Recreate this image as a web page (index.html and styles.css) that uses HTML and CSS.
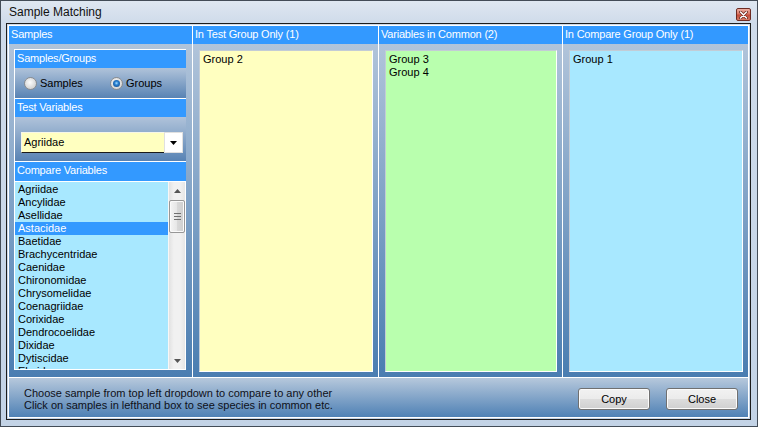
FILE: index.html
```html
<!DOCTYPE html>
<html>
<head>
<meta charset="utf-8">
<title>Sample Matching</title>
<link rel="stylesheet" href="styles.css">
</head>
<body>
<div class="window">
  <div class="titlebar">
    <span class="title">Sample Matching</span>
    <span class="close-btn"><svg width="9" height="8" viewBox="0 0 9 8"><path d="M1.5 1 L7.5 7 M7.5 1 L1.5 7" stroke="#6a2b22" stroke-width="3" stroke-linecap="round"/><path d="M1.5 1 L7.5 7 M7.5 1 L1.5 7" stroke="#ffffff" stroke-width="1.5" stroke-linecap="round"/></svg></span>
  </div>
  <div class="client">
    <div class="client-inner">
      <div class="panels">
        <section class="panel">
          <div class="phead">Samples</div>
          <div class="pbody left-body">
            <div class="sub">
              <div class="shead">Samples/Groups</div>
              <div class="sbody radios">
                <div class="radio"><span class="radio-dot"></span><span>Samples</span></div>
                <div class="radio"><span class="radio-dot checked"></span><span>Groups</span></div>
              </div>
            </div>
            <div class="sub">
              <div class="shead">Test Variables</div>
              <div class="sbody combo-body">
                <div class="combo">
                  <div class="combo-field">Agriidae</div>
                  <div class="combo-btn"><svg width="7" height="4" viewBox="0 0 7 4"><path d="M0 0H7L3.5 4Z" fill="#000"/></svg></div>
                </div>
              </div>
            </div>
            <div class="sub sub-list">
              <div class="shead shead-list">Compare Variables</div>
              <div class="listbox">
                <ul class="items">
                  <li>Agriidae</li>
                  <li>Ancylidae</li>
                  <li>Asellidae</li>
                  <li class="sel">Astacidae</li>
                  <li>Baetidae</li>
                  <li>Brachycentridae</li>
                  <li>Caenidae</li>
                  <li>Chironomidae</li>
                  <li>Chrysomelidae</li>
                  <li>Coenagriidae</li>
                  <li>Corixidae</li>
                  <li>Dendrocoelidae</li>
                  <li>Dixidae</li>
                  <li>Dytiscidae</li>
                  <li>Elmidae</li>
                </ul>
                <div class="scrollbar">
                  <div class="sb-btn"><svg width="7" height="4" viewBox="0 0 7 4"><path d="M0 4H7L3.5 0Z" fill="#555"/></svg></div>
                  <div class="sb-track">
                    <div class="sb-thumb"><svg width="7" height="7" viewBox="0 0 7 7"><path d="M0 0.5H7M0 3.5H7M0 6.5H7" stroke="#707070" stroke-width="1"/></svg></div>
                  </div>
                  <div class="sb-btn"><svg width="7" height="4" viewBox="0 0 7 4"><path d="M0 0H7L3.5 4Z" fill="#555"/></svg></div>
                </div>
              </div>
            </div>
          </div>
        </section>
        <section class="panel col">
          <div class="phead">In Test Group Only (1)</div>
          <div class="pbody col-body">
            <div class="box yellow"><div>Group 2</div></div>
          </div>
        </section>
        <section class="panel col">
          <div class="phead">Variables in Common (2)</div>
          <div class="pbody col-body">
            <div class="box green"><div>Group 3</div><div>Group 4</div></div>
          </div>
        </section>
        <section class="panel col">
          <div class="phead">In Compare Group Only (1)</div>
          <div class="pbody col-body">
            <div class="box blue"><div>Group 1</div></div>
          </div>
        </section>
      </div>
      <div class="bottombar">
        <div class="hint">
          <div>Choose sample from top left dropdown to compare to any other</div>
          <div>Click on samples in lefthand box to see species in common etc.</div>
        </div>
        <div class="buttons">
          <button class="btn">Copy</button>
          <button class="btn">Close</button>
        </div>
      </div>
    </div>
  </div>
</div>
</body>
</html>
```

FILE: styles.css
```css
* { box-sizing: border-box; }
html, body { margin: 0; padding: 0; }
body {
  width: 758px;
  height: 427px;
  overflow: hidden;
  font-family: "Liberation Sans", Arial, sans-serif;
  font-size: 11px;
  color: #000;
  background: #c6d5e7;
}
.window {
  width: 758px;
  height: 427px;
  border: 1px solid #434c57;
  background: linear-gradient(180deg, #dfe7f1 0, #cfdbea 22px, #c3d3e6 100%);
  display: flex;
  flex-direction: column;
}
.titlebar {
  height: 22px;
  flex-shrink: 0;
  display: flex;
  align-items: flex-start;
  padding-left: 8px;
}
.title {
  font-size: 12px;
  line-height: 22px;
  color: #111;
}
.close-btn {
  margin-left: auto;
  margin-top: 7px;
  margin-right: 6px;
  width: 15px;
  height: 13px;
  border: 1px solid #6e2b22;
  border-radius: 2px;
  background: linear-gradient(#eeb0a3, #da7663 45%, #c44a36 55%, #d67c67);
  display: flex;
  align-items: center;
  justify-content: center;
}
.client {
  margin: 0 6px 0 5px;
  height: 397px;
  flex-shrink: 0;
  border: 1px solid #1c1c1c;
  padding: 1px;
}
.client-inner {
  height: 100%;
  border: 1px solid #fff;
  display: flex;
  flex-direction: column;
}
.panels {
  display: grid;
  grid-template-columns: 183px 186px 184px 186px;
  height: 351px;
  flex-shrink: 0;
}
.panel {
  display: flex;
  flex-direction: column;
  min-height: 0;
}
.panel.col { border-left: 1px solid #fff; }
.phead, .shead {
  height: 18px;
  flex-shrink: 0;
  background: #3399ff;
  color: #fff;
  padding: 1px 2px 0 2px;
  line-height: 14px;
  letter-spacing: -0.2px;
  white-space: nowrap;
  overflow: hidden;
}
.pbody {
  flex: 1;
  min-height: 0;
  background: linear-gradient(#b1c4da, #4a7db1);
  display: flex;
  flex-direction: column;
}
.col-body { padding: 6px 5px 5px 6px; }
.box {
  flex: 1;
  border: 1px solid;
  border-color: #c3ccd6 #fff #fff #c3ccd6;
  padding: 2px 3px;
  line-height: 13px;
}
.yellow { background: #ffffc0; }
.green { background: #b9ffae; }
.blue { background: #a8e8ff; }

.left-body { padding: 5px 6px 7px 5px; }
.sub {
  border-top: 1px solid #fff;
  border-left: 1px solid #fff;
  display: flex;
  flex-direction: column;
  flex-shrink: 0;
}
.sbody { background: linear-gradient(#b0c3da, #5883b4); }
.radios {
  height: 30px;
  display: grid;
  grid-template-columns: 86px 86px;
  align-items: center;
  padding-left: 9px;
}
.radio {
  display: flex;
  align-items: center;
  gap: 3px;
  line-height: 13px;
}
.radio-dot {
  width: 13px;
  height: 13px;
  border-radius: 50%;
  border: 1px solid #8a8c8f;
  background: radial-gradient(circle at 45% 40%, #fdfdfd 0, #e6e6e6 40%, #c4c4c4 100%);
  display: flex;
  align-items: center;
  justify-content: center;
}
.radio-dot.checked::after {
  content: "";
  width: 7px;
  height: 7px;
  border-radius: 50%;
  background: radial-gradient(circle at 50% 45%, #a6e0ff 0, #2a80d2 35%, #0c3e78 100%);
}
.combo-body {
  height: 44px;
  padding: 15px 0 0 6px;
}
.combo {
  display: flex;
  width: 162px;
  height: 21px;
}
.combo-field {
  flex: 1;
  background: #ffffc0;
  border-top: 1px solid #f6f6e8;
  border-left: 1px solid #f6f6e8;
  border-bottom: 1px solid #1a1a1a;
  padding-left: 2px;
  line-height: 19px;
}
.combo-btn {
  width: 19px;
  background: #fff;
  border: 1px solid #e0e0e0;
  display: flex;
  align-items: center;
  justify-content: center;
}
.sub-list {
  flex: 1;
  min-height: 0;
}
.shead-list { height: 19px; }
.listbox {
  flex: 1;
  min-height: 0;
  display: flex;
  background: #a8e8ff;
  border-top: 1px solid #fff;
  border-right: 1px solid #fff;
  border-bottom: 1px solid #fff;
}
.items {
  flex: 1;
  margin: 0;
  padding: 1px 0 0 0;
  list-style: none;
  overflow: hidden;
  line-height: 13px;
}
.items li {
  height: 13px;
  padding-left: 3px;
  white-space: nowrap;
}
.items li.sel {
  background: #3399ff;
  color: #fff;
}
.scrollbar {
  width: 17px;
  display: flex;
  flex-direction: column;
  border-left: 1px solid #f7f7f7;
  background: linear-gradient(90deg, #e2e2e2, #f1f1f1 30%, #f1f1f1 70%, #e6e6e6);
}
.sb-btn {
  height: 17px;
  flex-shrink: 0;
  display: flex;
  align-items: center;
  justify-content: center;
}
.sb-track {
  flex: 1;
  padding: 1px 0 0 0;
}
.sb-thumb {
  height: 33px;
  border: 1px solid #979797;
  border-radius: 2px;
  background: linear-gradient(90deg, #f5f5f5, #e6e6e6 50%, #d9d9d9 50%, #cfcfcf);
  box-shadow: inset 0 0 0 1px #fafafa;
  display: flex;
  align-items: center;
  justify-content: center;
}
.bottombar {
  flex: 1;
  border-top: 1px solid #fff;
  background: linear-gradient(#b6c8dc, #4f81b5);
  display: flex;
  align-items: flex-start;
  padding: 0 10px 0 15px;
}
.hint {
  flex: 1;
  padding-top: 9px;
  line-height: 12px;
  color: #0e1018;
}
.buttons {
  display: flex;
  gap: 16px;
  margin-top: 10px;
}
.btn {
  width: 72px;
  height: 22px;
  border: 1px solid #707070;
  border-radius: 3px;
  background: linear-gradient(#f2f2f2, #ebebeb 50%, #dddddd 50%, #cfcfcf);
  box-shadow: inset 0 0 0 1px #fbfbfb;
  font: 11px "Liberation Sans", Arial, sans-serif;
  color: #000;
  padding: 0;
}
```
